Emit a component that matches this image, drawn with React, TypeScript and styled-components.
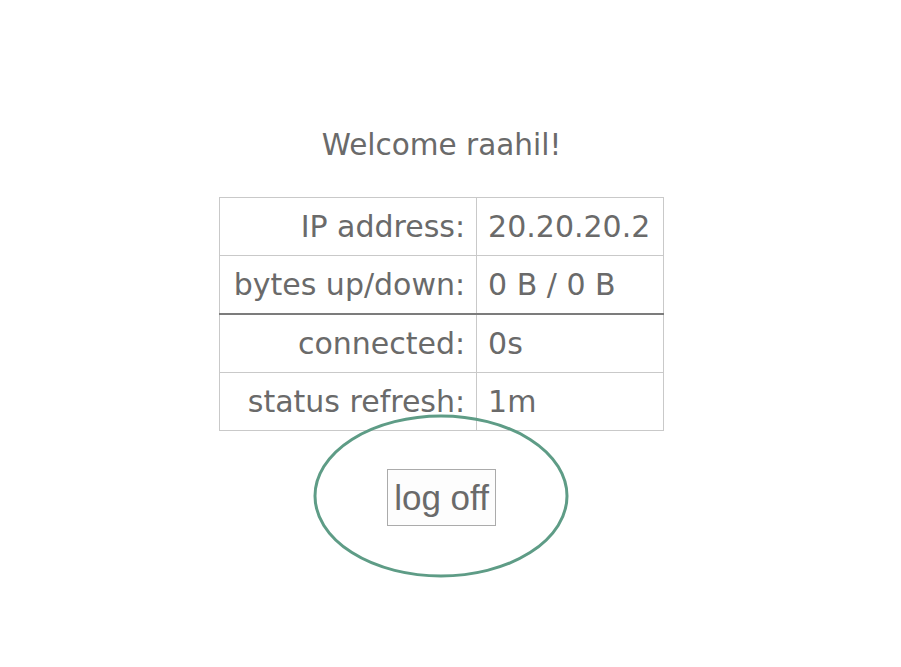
import styled, { createGlobalStyle } from 'styled-components';

const GlobalStyle = createGlobalStyle`
  html, body {
    margin: 0;
    padding: 0;
    background: #ffffff;
  }
`;

const Page = styled.div`
  width: 883px;
  min-height: 667px;
  box-sizing: border-box;
  padding-top: 126px;
  display: flex;
  flex-direction: column;
  align-items: center;
  font-family: "DejaVu Sans", Verdana, sans-serif;
  color: #6a6a6a;
`;

const Welcome = styled.h1`
  margin: 0;
  font-size: 29.5px;
  font-weight: normal;
  line-height: 38px;
`;

const StatusTable = styled.table`
  margin-top: 33px;
  border-collapse: collapse;
  font-size: 30px;
`;

const Row = styled.tr<{ $divider?: boolean }>`
  border-top: ${(p) => (p.$divider ? '2px solid #7c7c7c' : '1px solid #c9c9c9')};
`;

const Cell = styled.td<{ $label?: boolean }>`
  height: 57px;
  padding: ${(p) => (p.$label ? '0 11px 0 14px' : '0 13px 0 11px')};
  border: 1px solid #c9c9c9;
  text-align: ${(p) => (p.$label ? 'right' : 'left')};
  white-space: nowrap;
  vertical-align: middle;
`;

const ButtonArea = styled.div`
  position: relative;
  margin-top: 38px;
  display: flex;
  justify-content: center;
`;

const LogOffButton = styled.button`
  height: 57px;
  padding: 0 6px;
  border: 1px solid #ababab;
  background: #fdfdfd;
  color: #6a6a6a;
  font-family: "Liberation Sans", Arial, sans-serif;
  font-size: 35px;
`;

const Highlight = styled.svg`
  position: absolute;
  left: 50%;
  top: 50%;
  width: 260px;
  height: 168px;
  margin-left: -131px;
  margin-top: -86px;
  pointer-events: none;
  overflow: visible;
`;

const rows = [
  { label: 'IP address:', value: '20.20.20.2' },
  { label: 'bytes up/down:', value: '0 B / 0 B' },
  { label: 'connected:', value: '0s', divider: true },
  { label: 'status refresh:', value: '1m' },
];

export default function App() {
  return (
    <>
      <GlobalStyle />
      <Page>
        <Welcome>Welcome raahil!</Welcome>
        <StatusTable>
          <tbody>
            {rows.map((r) => (
              <Row key={r.label} $divider={r.divider}>
                <Cell $label>{r.label}</Cell>
                <Cell>{r.value}</Cell>
              </Row>
            ))}
          </tbody>
        </StatusTable>
        <ButtonArea>
          <LogOffButton>log off</LogOffButton>
          <Highlight viewBox="0 0 260 168">
            <ellipse cx="130" cy="84" rx="126" ry="80" fill="none" stroke="#5e9c86" strokeWidth="3" />
          </Highlight>
        </ButtonArea>
      </Page>
    </>
  );
}
